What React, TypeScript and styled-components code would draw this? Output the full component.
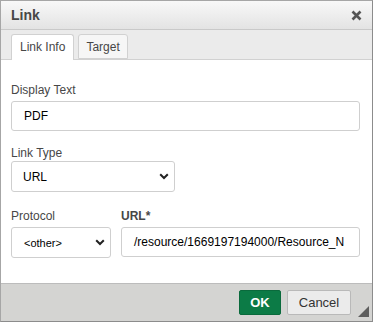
import styled, { createGlobalStyle } from 'styled-components'

const GlobalStyle = createGlobalStyle`
  html, body {
    margin: 0;
    padding: 0;
    background: #ffffff;
  }
  * {
    box-sizing: border-box;
  }
  body {
    font-family: "Liberation Sans", Arial, sans-serif;
  }
`

const Chevron = () => (
  <svg width="10" height="7" viewBox="0 0 10 7">
    <path d="M1.2 1.2 L5 5 L8.8 1.2" fill="none" stroke="#222" strokeWidth="2" />
  </svg>
)

const CloseIcon = () => (
  <svg width="11" height="11" viewBox="0 0 11 11">
    <path d="M1.5 1.5 L9.5 9.5 M9.5 1.5 L1.5 9.5" stroke="#555" strokeWidth="2.6" />
  </svg>
)

const App = () => {
  return (
    <>
      <GlobalStyle />
      <Dialog>
        <TitleBar>
          <Title>Link</Title>
          <CloseButton>
            <CloseIcon />
          </CloseButton>
        </TitleBar>
        <TabBar>
          <Tab $active>Link Info</Tab>
          <Tab>Target</Tab>
        </TabBar>
        <Body>
          <Field $top={23}>
            <Label>Display Text</Label>
            <TextInput>PDF</TextInput>
          </Field>
          <Field $top={15}>
            <Label $gap={1}>Link Type</Label>
            <SelectBox $width={164}>
              <span>URL</span>
              <Chevron />
            </SelectBox>
          </Field>
          <Row>
            <Field $top={0} $width={100}>
              <Label>Protocol</Label>
              <SelectBox $width={100} $small>
                <span>&lt;other&gt;</span>
                <Chevron />
              </SelectBox>
            </Field>
            <Field $top={0} $grow>
              <Label $bold>URL*</Label>
              <TextInput>/resource/1669197194000/Resource_N</TextInput>
            </Field>
          </Row>
        </Body>
        <Footer>
          <OkButton>OK</OkButton>
          <CancelButton>Cancel</CancelButton>
          <ResizeGrip />
        </Footer>
      </Dialog>
    </>
  )
}

export default App

const Dialog = styled.div`
  width: 373px;
  height: 322px;
  display: flex;
  flex-direction: column;
  border: 1px solid #a6a6a6;
  border-right-color: #8c8c8c;
  border-bottom-color: #8c8c8c;
  background: #ffffff;
`

const TitleBar = styled.div`
  height: 29px;
  flex-shrink: 0;
  display: flex;
  align-items: center;
  justify-content: space-between;
  padding: 0 10px 0 10px;
  background: linear-gradient(to bottom, #f8f8f8, #e3e3e3);
  border-bottom: 1px solid #c9c9c9;
`

const Title = styled.span`
  font-size: 14px;
  font-weight: bold;
  color: #474747;
`

const CloseButton = styled.span`
  display: flex;
  align-items: center;
`

const TabBar = styled.div`
  height: 30px;
  flex-shrink: 0;
  display: flex;
  align-items: flex-end;
  gap: 4px;
  padding: 0 10px;
  background: #ebebeb;
  border-bottom: 1px solid #d1d1d1;
`

const Tab = styled.div<{ $active?: boolean }>`
  height: ${p => (p.$active ? 26 : 25)}px;
  margin-bottom: ${p => (p.$active ? -1 : 0)}px;
  padding: ${p => (p.$active ? '0 8px 1px' : '0 7px')};
  display: flex;
  align-items: center;
  font-size: 12px;
  color: #474747;
  background: ${p => (p.$active ? '#ffffff' : '#f6f6f6')};
  border: 1px solid #d1d1d1;
  border-bottom: ${p => (p.$active ? 'none' : '1px solid #d1d1d1')};
  border-radius: 3px 3px 0 0;
`

const Body = styled.div`
  flex: 1;
  padding: 0 12px 0 10px;
  background: #ffffff;
`

const Row = styled.div`
  display: flex;
  gap: 10px;
  margin-top: 17px;
`

const Field = styled.div<{ $top: number; $width?: number; $grow?: boolean }>`
  display: flex;
  flex-direction: column;
  margin-top: ${p => p.$top}px;
  ${p => (p.$width ? `width: ${p.$width}px;` : '')}
  ${p => (p.$grow ? 'flex: 1; min-width: 0;' : '')}
`

const Label = styled.label<{ $bold?: boolean; $gap?: number }>`
  font-size: 12px;
  line-height: 14px;
  margin-bottom: ${p => p.$gap ?? 4}px;
  color: #474747;
  font-weight: ${p => (p.$bold ? 'bold' : 'normal')};
`

const TextInput = styled.div`
  height: 30px;
  display: flex;
  align-items: center;
  padding: 0 12px;
  font-size: 12px;
  color: #000000;
  white-space: nowrap;
  overflow: hidden;
  border: 1px solid #cfcfcf;
  border-radius: 3px;
  background: #ffffff;
`

const SelectBox = styled.div<{ $width: number; $small?: boolean }>`
  width: ${p => p.$width}px;
  height: 31px;
  display: flex;
  align-items: center;
  justify-content: space-between;
  padding: 0 5px 0 ${p => (p.$small ? 12 : 11)}px;
  font-size: ${p => (p.$small ? 11 : 12)}px;
  color: #000000;
  border: 1px solid #cfcfcf;
  border-radius: 3px;
  background: #ffffff;
`

const Footer = styled.div`
  position: relative;
  height: 38px;
  flex-shrink: 0;
  display: flex;
  align-items: center;
  justify-content: flex-end;
  gap: 6px;
  padding: 0 21px 0 0;
  background: #d4d4d2;
  border-top: 1px solid #bcbcbc;
`

const OkButton = styled.div`
  width: 42px;
  height: 25px;
  display: flex;
  align-items: center;
  justify-content: center;
  font-size: 13px;
  font-weight: bold;
  color: #ffffff;
  background: #0c7b46;
  border: 1px solid #0a6a3c;
  border-radius: 2px;
`

const CancelButton = styled.div`
  width: 64px;
  height: 25px;
  display: flex;
  align-items: center;
  justify-content: center;
  font-size: 13px;
  color: #333333;
  background: #ebebeb;
  border: 1px solid #b9b9b9;
  border-radius: 2px;
`

const ResizeGrip = styled.span`
  position: absolute;
  right: 3px;
  bottom: 4px;
  width: 11px;
  height: 11px;
  background: #5e5e5e;
  clip-path: polygon(100% 0, 100% 100%, 0 100%);
`
